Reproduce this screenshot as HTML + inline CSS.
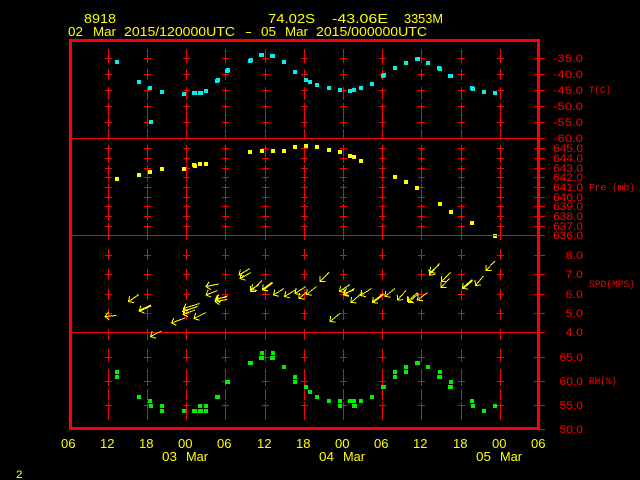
<!DOCTYPE html>
<html>
<head>
<meta charset="utf-8">
<style>
html,body{margin:0;padding:0;background:#000;width:640px;height:480px;overflow:hidden}
svg{display:block}
text{font-family:"Liberation Sans",sans-serif}
.y{fill:#ff0;font-size:13px}
.r{fill:#f00;font-size:11px}
.s{fill:#f00;font-size:10px;font-family:"Liberation Mono",monospace}
</style>
</head>
<body>
<svg width="640" height="480" viewBox="0 0 640 480" xmlns="http://www.w3.org/2000/svg">
<defs>
<marker id="h" markerUnits="userSpaceOnUse" markerWidth="14" markerHeight="14" viewBox="-7 -7 14 14" refX="0" refY="0" orient="auto" overflow="visible">
<path d="M4 -4L0 0L4 4" fill="none" stroke="#ff0" stroke-width="1" shape-rendering="crispEdges"/>
</marker>
<g id="c">
<path fill="none" stroke="#f00" stroke-width="1" shape-rendering="crispEdges" d="M.5 49V63M.5 69V80M.5 87V100M.5 103V127M.5 129V139M.5 145V163M.5 165V182M.5 184V202M.5 204V221M.5 223V240M.5 249V260M.5 269V280M.5 289V300M.5 309V320M.5 329V340M.5 349V362M.5 369V386M.5 389V400M.5 402V420
M-3 58.5H4M-3 74.5H4M-3 90.5H4M-3 106.5H4M-3 122.5H4
M-3 148.5H4M-3 158.5H4M-3 168.5H4M-3 177.5H4M-3 187.5H4M-3 197.5H4M-3 206.5H4M-3 216.5H4M-3 226.5H4
M-3 255.5H4M-3 274.5H4M-3 294.5H4M-3 313.5H4
M-3 357.5H4M-3 381.5H4M-3 405.5H4"/>
</g>
</defs>

<rect width="640" height="480" fill="#000"/>

<use href="#c" x="108"/><use href="#c" x="147"/><use href="#c" x="186"/><use href="#c" x="225"/><use href="#c" x="265"/><use href="#c" x="304"/><use href="#c" x="343"/><use href="#c" x="382"/><use href="#c" x="421"/><use href="#c" x="461"/><use href="#c" x="500"/>

<!-- separators and right ticks -->
<path fill="none" stroke="#f00" stroke-width="1" shape-rendering="crispEdges" d="M72 138.5H545M72 235.5H545M72 332.5H545
M534 58.5H545M534 74.5H545M534 90.5H545M534 106.5H545M534 122.5H545
M534 148.5H545M534 158.5H545M534 168.5H545M534 177.5H545M534 187.5H545M534 197.5H545M534 206.5H545M534 216.5H545M534 226.5H545
M534 255.5H545M534 274.5H545M534 294.5H545M534 313.5H545
M534 357.5H545M534 381.5H545M534 405.5H545M534 429.5H545"/>

<!-- T -->
<path fill="#00f0f0" d="M115 60h4v4h-4zM137 80h4v4h-4zM148 86h4v4h-4zM149 120h4v4h-4zM160 90h4v4h-4zM182 92h4v4h-4zM192 91h5v4h-5zM198 91h5v4h-5zM204 89h4v4h-4zM215 79h4v4h-4zM216 78h4v4h-4zM225 69h4v4h-4zM226 68h4v4h-4zM248 59h4v4h-4zM249 58h4v4h-4zM259 53h5v4h-5zM270 54h5v4h-5zM282 60h4v4h-4zM293 70h4v4h-4zM304 78h4v4h-4zM308 80h4v4h-4zM315 83h4v4h-4zM327 86h4v4h-4zM338 88h4v4h-4zM348 89h4v4h-4zM352 88h4v4h-4zM359 86h4v4h-4zM370 82h4v4h-4zM381 74h4v4h-4zM382 73h4v4h-4zM393 66h4v4h-4zM404 61h4v4h-4zM415 57h5v4h-5zM426 61h4v4h-4zM437 66h4v4h-4zM438 67h4v4h-4zM448 74h5v4h-5zM470 86h4v4h-4zM471 87h4v4h-4zM482 90h4v4h-4zM493 91h4v4h-4z"/>
<!-- Pre -->
<path fill="#ff0" d="M115 177h4v4h-4zM137 173h4v4h-4zM148 170h4v4h-4zM160 167h4v4h-4zM182 167h4v4h-4zM192 163h4v4h-4zM193 164h4v4h-4zM198 162h4v4h-4zM204 162h4v4h-4zM248 150h4v4h-4zM260 149h4v4h-4zM271 149h4v4h-4zM282 149h4v4h-4zM293 145h4v4h-4zM304 144h4v4h-4zM315 145h4v4h-4zM327 148h4v4h-4zM338 150h4v4h-4zM348 154h4v4h-4zM352 155h4v4h-4zM359 159h4v4h-4zM393 175h4v4h-4zM404 180h4v4h-4zM415 186h4v4h-4zM438 202h4v4h-4zM449 210h4v4h-4zM470 221h4v4h-4zM493 234h4v4h-4z"/>
<rect x="493" y="235" width="4" height="1" fill="#f00"/>
<!-- RH -->
<path fill="#00f000" d="M115 370h4v4h-4zM115 375h4v4h-4zM137 395h4v4h-4zM148 399h4v4h-4zM149 404h4v4h-4zM160 404h4v4h-4zM160 409h4v4h-4zM182 409h4v4h-4zM192 409h5v4h-5zM198 404h4v4h-4zM198 409h5v4h-5zM204 404h4v4h-4zM204 409h4v4h-4zM215 395h5v4h-5zM225 380h5v4h-5zM248 361h5v4h-5zM260 351h4v4h-4zM259 356h5v4h-5zM271 351h4v4h-4zM270 356h5v4h-5zM282 365h4v4h-4zM293 375h4v4h-4zM293 380h4v4h-4zM304 385h4v4h-4zM308 390h4v4h-4zM315 395h4v4h-4zM327 399h4v4h-4zM338 399h4v4h-4zM338 404h4v4h-4zM348 399h5v4h-5zM352 399h4v4h-4zM352 404h5v4h-5zM359 399h4v4h-4zM370 395h4v4h-4zM381 385h5v4h-5zM393 370h4v4h-4zM393 375h4v4h-4zM404 365h4v4h-4zM404 370h4v4h-4zM415 361h5v4h-5zM426 365h4v4h-4zM438 370h4v4h-4zM437 375h5v4h-5zM449 380h4v4h-4zM448 385h5v4h-5zM470 399h4v4h-4zM471 404h4v4h-4zM482 409h4v4h-4zM493 404h4v4h-4z"/>

<!-- Wind arrows -->
<g stroke="#ff0" stroke-width="1" fill="none" shape-rendering="crispEdges" marker-start="url(#h)">
<line x1="105" y1="316.5" x2="116.5" y2="315.5"/>
<line x1="128.5" y1="301.5" x2="139" y2="294.5"/>
<line x1="139" y1="311" x2="151" y2="305.5" stroke-width="2"/>
<line x1="150.5" y1="336.5" x2="161.5" y2="331"/>
<line x1="171.5" y1="323" x2="185" y2="318"/>
<line x1="183.5" y1="308.5" x2="199.5" y2="303.5"/>
<line x1="182.5" y1="311.5" x2="197.5" y2="306.5"/>
<line x1="183" y1="314.5" x2="195" y2="310"/>
<line x1="194" y1="318.5" x2="206" y2="312.5"/>
<line x1="206" y1="286.5" x2="218.5" y2="284"/>
<line x1="206" y1="295" x2="217.5" y2="290.5"/>
<line x1="215" y1="300" x2="227.5" y2="296"/>
<line x1="215" y1="301.5" x2="227.5" y2="299.5"/>
<line x1="216" y1="299" x2="226.5" y2="297"/>
<line x1="239" y1="275" x2="250" y2="268.5"/>
<line x1="240" y1="278.5" x2="251" y2="272.5"/>
<line x1="250.5" y1="291.5" x2="262" y2="280.5"/>
<line x1="251.5" y1="289.5" x2="259" y2="284.5"/>
<line x1="262.5" y1="290" x2="272.5" y2="282.5" stroke-width="2"/>
<line x1="273.5" y1="295" x2="284" y2="288.5"/>
<line x1="284.5" y1="296.5" x2="295.5" y2="290"/>
<line x1="295" y1="293.5" x2="306" y2="286.5"/>
<line x1="299" y1="298.5" x2="306" y2="292.5"/>
<line x1="306.5" y1="294.5" x2="316.5" y2="286.5"/>
<line x1="320" y1="281.5" x2="329" y2="272.5"/>
<line x1="330" y1="321.5" x2="340" y2="313.5"/>
<line x1="339.5" y1="291.5" x2="350" y2="284.5"/>
<line x1="343.5" y1="295" x2="354.5" y2="288.5"/>
<line x1="344" y1="293.5" x2="354" y2="290"/>
<line x1="351" y1="302.5" x2="362.5" y2="292.5"/>
<line x1="360.5" y1="295.5" x2="371.5" y2="288.5"/>
<line x1="372.5" y1="302.5" x2="383.5" y2="294" stroke-width="2"/>
<line x1="385" y1="296.5" x2="395" y2="288.5"/>
<line x1="397.5" y1="300" x2="406" y2="290.5"/>
<line x1="407.5" y1="301.5" x2="417.5" y2="292.5"/>
<line x1="408.5" y1="302.5" x2="418.5" y2="293.5"/>
<line x1="417.5" y1="300" x2="427.5" y2="292.5"/>
<line x1="429.5" y1="275" x2="439.5" y2="263.5"/>
<line x1="430" y1="272.5" x2="439" y2="265"/>
<line x1="441.5" y1="281.5" x2="450.5" y2="272.5"/>
<line x1="441" y1="287.5" x2="449.5" y2="278.5"/>
<line x1="462.5" y1="288.5" x2="472.5" y2="280" stroke-width="2"/>
<line x1="475.5" y1="285.5" x2="483.5" y2="276"/>
<line x1="486" y1="270.5" x2="495" y2="261"/>
</g>

<!-- Frame -->
<path fill="none" stroke="#f00" stroke-width="3" shape-rendering="crispEdges" d="M70.5 40.5H538.5V428.5H70.5Z"/>

<!-- Header -->
<text class="y" x="84" y="23" textLength="32" lengthAdjust="spacingAndGlyphs">8918</text>
<text class="y" x="268" y="23" textLength="47" lengthAdjust="spacingAndGlyphs">74.02S</text>
<text class="y" x="332" y="23" textLength="56" lengthAdjust="spacingAndGlyphs">-43.06E</text>
<text class="y" x="404" y="23" textLength="39" lengthAdjust="spacingAndGlyphs">3353M</text>
<text class="y" x="68" y="36" textLength="15" lengthAdjust="spacingAndGlyphs">02</text>
<text class="y" x="93" y="36" textLength="23" lengthAdjust="spacingAndGlyphs">Mar</text>
<text class="y" x="124" y="36" textLength="111" lengthAdjust="spacingAndGlyphs">2015/120000UTC</text>
<text class="y" x="245" y="36" textLength="7" lengthAdjust="spacingAndGlyphs">-</text>
<text class="y" x="261" y="36" textLength="15" lengthAdjust="spacingAndGlyphs">05</text>
<text class="y" x="285" y="36" textLength="23" lengthAdjust="spacingAndGlyphs">Mar</text>
<text class="y" x="316" y="36" textLength="111" lengthAdjust="spacingAndGlyphs">2015/000000UTC</text>

<!-- T labels -->
<text class="r" x="553" y="62" textLength="30" lengthAdjust="spacingAndGlyphs">-35.0</text>
<text class="r" x="553" y="78" textLength="30" lengthAdjust="spacingAndGlyphs">-40.0</text>
<text class="r" x="553" y="94" textLength="30" lengthAdjust="spacingAndGlyphs">-45.0</text>
<text class="r" x="553" y="110" textLength="30" lengthAdjust="spacingAndGlyphs">-50.0</text>
<text class="r" x="553" y="126" textLength="30" lengthAdjust="spacingAndGlyphs">-55.0</text>
<text class="r" x="553" y="142" textLength="30" lengthAdjust="spacingAndGlyphs">-60.0</text>
<!-- Pre labels -->
<text class="r" x="553" y="152" textLength="30" lengthAdjust="spacingAndGlyphs">645.0</text>
<text class="r" x="553" y="162" textLength="30" lengthAdjust="spacingAndGlyphs">644.0</text>
<text class="r" x="553" y="172" textLength="30" lengthAdjust="spacingAndGlyphs">643.0</text>
<text class="r" x="553" y="181" textLength="30" lengthAdjust="spacingAndGlyphs">642.0</text>
<text class="r" x="553" y="191" textLength="30" lengthAdjust="spacingAndGlyphs">641.0</text>
<text class="r" x="553" y="201" textLength="30" lengthAdjust="spacingAndGlyphs">640.0</text>
<text class="r" x="553" y="210" textLength="30" lengthAdjust="spacingAndGlyphs">639.0</text>
<text class="r" x="553" y="220" textLength="30" lengthAdjust="spacingAndGlyphs">638.0</text>
<text class="r" x="553" y="230" textLength="30" lengthAdjust="spacingAndGlyphs">637.0</text>
<text class="r" x="553" y="239" textLength="30" lengthAdjust="spacingAndGlyphs">636.0</text>
<!-- SPD labels -->
<text class="r" x="565.5" y="259" textLength="17.5" lengthAdjust="spacingAndGlyphs">8.0</text>
<text class="r" x="565.5" y="278" textLength="17.5" lengthAdjust="spacingAndGlyphs">7.0</text>
<text class="r" x="565.5" y="298" textLength="17.5" lengthAdjust="spacingAndGlyphs">6.0</text>
<text class="r" x="565.5" y="317" textLength="17.5" lengthAdjust="spacingAndGlyphs">5.0</text>
<text class="r" x="565.5" y="336" textLength="17.5" lengthAdjust="spacingAndGlyphs">4.0</text>
<!-- RH labels -->
<text class="r" x="559.5" y="361" textLength="23.5" lengthAdjust="spacingAndGlyphs">65.0</text>
<text class="r" x="559.5" y="385" textLength="23.5" lengthAdjust="spacingAndGlyphs">60.0</text>
<text class="r" x="559.5" y="409" textLength="23.5" lengthAdjust="spacingAndGlyphs">55.0</text>
<text class="r" x="559.5" y="433" textLength="23.5" lengthAdjust="spacingAndGlyphs">50.0</text>
<!-- Side labels -->
<text class="s" x="589" y="93" textLength="22" lengthAdjust="spacingAndGlyphs">T(C)</text>
<text class="s" x="589" y="190.5" textLength="46" lengthAdjust="spacingAndGlyphs">Pre (mb)</text>
<text class="s" x="589" y="287" textLength="46" lengthAdjust="spacingAndGlyphs">SPD(MPS)</text>
<text class="s" x="589" y="384" textLength="28" lengthAdjust="spacingAndGlyphs">RH(%)</text>

<!-- X axis -->
<text class="y" x="61" y="448" textLength="14.5" lengthAdjust="spacingAndGlyphs">06</text>
<text class="y" x="100" y="448" textLength="14.5" lengthAdjust="spacingAndGlyphs">12</text>
<text class="y" x="139" y="448" textLength="14.5" lengthAdjust="spacingAndGlyphs">18</text>
<text class="y" x="178" y="448" textLength="14.5" lengthAdjust="spacingAndGlyphs">00</text>
<text class="y" x="217" y="448" textLength="14.5" lengthAdjust="spacingAndGlyphs">06</text>
<text class="y" x="257" y="448" textLength="14.5" lengthAdjust="spacingAndGlyphs">12</text>
<text class="y" x="296" y="448" textLength="14.5" lengthAdjust="spacingAndGlyphs">18</text>
<text class="y" x="335" y="448" textLength="14.5" lengthAdjust="spacingAndGlyphs">00</text>
<text class="y" x="374" y="448" textLength="14.5" lengthAdjust="spacingAndGlyphs">06</text>
<text class="y" x="413" y="448" textLength="14.5" lengthAdjust="spacingAndGlyphs">12</text>
<text class="y" x="453" y="448" textLength="14.5" lengthAdjust="spacingAndGlyphs">18</text>
<text class="y" x="492" y="448" textLength="14.5" lengthAdjust="spacingAndGlyphs">00</text>
<text class="y" x="531" y="448" textLength="14.5" lengthAdjust="spacingAndGlyphs">06</text>

<text class="y" x="162" y="461" textLength="15" lengthAdjust="spacingAndGlyphs">03</text>
<text class="y" x="186" y="461" textLength="22" lengthAdjust="spacingAndGlyphs">Mar</text>
<text class="y" x="319" y="461" textLength="15" lengthAdjust="spacingAndGlyphs">04</text>
<text class="y" x="343" y="461" textLength="22" lengthAdjust="spacingAndGlyphs">Mar</text>
<text class="y" x="476" y="461" textLength="15" lengthAdjust="spacingAndGlyphs">05</text>
<text class="y" x="500" y="461" textLength="22" lengthAdjust="spacingAndGlyphs">Mar</text>

<text x="16" y="478" fill="#ff0" font-size="11" textLength="6.5" lengthAdjust="spacingAndGlyphs">2</text>
</svg>
</body>
</html>
